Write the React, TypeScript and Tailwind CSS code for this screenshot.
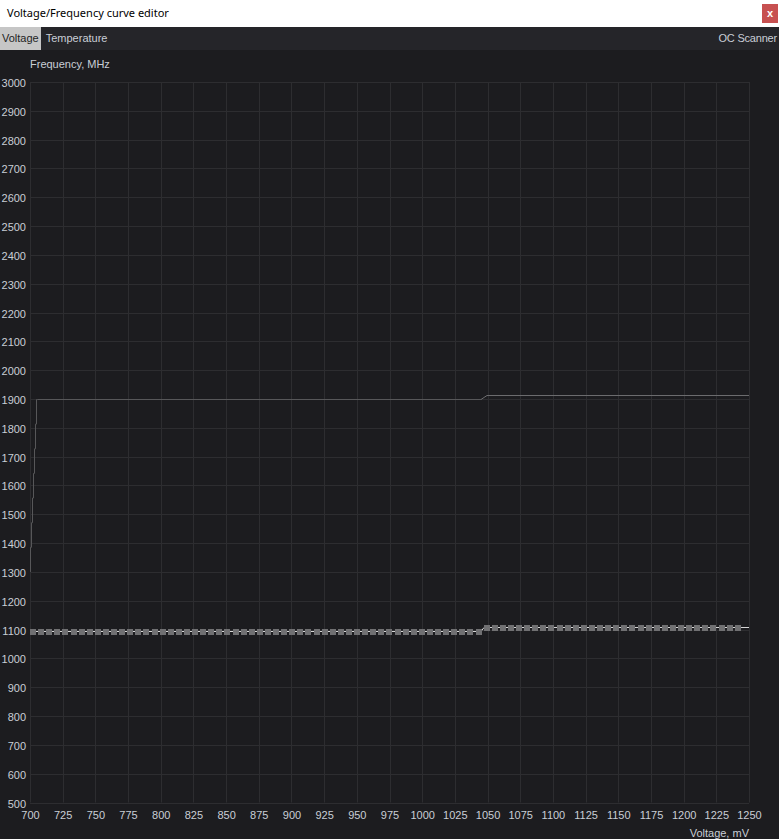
const FONT = { fontFamily: '"Liberation Sans", Arial, sans-serif' };

// plot geometry (svg coords, svg starts at page y=50)
const LEFT = 30;
const RIGHT = 749;
const TOP = 32;
const BOTTOM = 752.5;

const vx = (v: number) => LEFT + ((v - 700) / 550) * (RIGHT - LEFT);
const fy = (f: number) => TOP + ((3000 - f) / 2500) * (BOTTOM - TOP);
const px = (n: number) => Math.round(n) + 0.5;

const freqTicks = Array.from({ length: 26 }, (_, i) => 3000 - i * 100);
const voltTicks = Array.from({ length: 23 }, (_, i) => 700 + i * 25);

// lower curve: 88 points, ~8px apart
const lowPoints = Array.from({ length: 88 }, (_, i) => ({
  x: LEFT + i * 8.1,
  y: i <= 55 ? 581.5 : 577.5,
}));

function Chart() {
  // steep rise at the start of the upper curve
  const steps: string[] = [`M${px(30)},${fy(1300)}`];
  for (let k = 0; k < 7; k++) {
    const y = fy(1300) - (k + 1) * ((fy(1300) - 349.5) / 7);
    steps.push(`L${px(30 + k)},${y.toFixed(1)}`);
    steps.push(`L${px(31 + k)},${y.toFixed(1)}`);
  }
  const upperLeft = `${steps.join(' ')} L481,349.5`;
  const upperRight = 'M481,349.5 L487,345.5 L749,345.5';

  const lowLine = 'M30,581.5 L481,581.5 L484,577.5 L749,577.5';

  return (
    <svg width={779} height={789} className="block" style={FONT}>
      {/* grid */}
      {freqTicks.map((f) => (
        <line key={f} x1={LEFT} x2={RIGHT} y1={px(fy(f))} y2={px(fy(f))} stroke="#2d2d30" strokeWidth={1} />
      ))}
      {voltTicks.map((v) => (
        <line key={v} x1={px(vx(v))} x2={px(vx(v))} y1={TOP} y2={BOTTOM} stroke="#2d2d30" strokeWidth={1} />
      ))}

      {/* y labels */}
      {freqTicks.map((f) => (
        <text key={f} x={26} y={px(fy(f)) + 4} textAnchor="end" fontSize={11} fill="#c9ced6">
          {f}
        </text>
      ))}
      {/* x labels */}
      {voltTicks.map((v) => (
        <text key={v} x={vx(v) + 0.5} y={769} textAnchor="middle" fontSize={11} fill="#c9ced6">
          {v}
        </text>
      ))}

      <text x={30} y={18} fontSize={11} fill="#c9ced6">Frequency, MHz</text>
      <text x={749} y={787} textAnchor="end" fontSize={11} fill="#c9ced6">Voltage, mV</text>

      {/* upper curve */}
      <path d={upperLeft} fill="none" stroke="#575759" strokeWidth={1} />
      <path d={upperRight} fill="none" stroke="#6c6c6e" strokeWidth={1} />

      {/* lower curve with points */}
      <path d={lowLine} fill="none" stroke="#d6d6d6" strokeWidth={1} />
      {lowPoints.map((p, i) => (
        <rect key={i} x={Math.round(p.x)} y={p.y - 2.5} width={6} height={6} fill="#707072" />
      ))}
    </svg>
  );
}

export default function App() {
  return (
    <div className="w-[779px] h-[839px] flex flex-col bg-[#1c1c1f] overflow-hidden">
      {/* title bar */}
      <div className="h-[27px] bg-white flex items-center justify-between pl-[7px] pr-[1px]">
        <span className="text-[11px] text-black" style={{ fontFamily: '"Noto Sans", "Open Sans", sans-serif' }}>
          Voltage/Frequency curve editor
        </span>
        <button className="w-[16px] h-[19px] bg-[#c75050] text-white text-[11px] font-bold leading-none flex items-center justify-center" style={FONT}>
          x
        </button>
      </div>

      {/* tabs */}
      <div className="h-[23px] bg-[#252529] flex items-center justify-between text-[11px]" style={FONT}>
        <div className="flex items-center h-full">
          <div className="h-full px-[2px] bg-[#c6c6c6] text-[#1e1e1e] flex items-center">Voltage</div>
          <div className="px-[5px] text-[#c9ced6]">Temperature</div>
        </div>
        <div className="pr-[2px] text-[#c9ced6] tracking-[-0.2px]">OC Scanner</div>
      </div>

      <Chart />
    </div>
  );
}
